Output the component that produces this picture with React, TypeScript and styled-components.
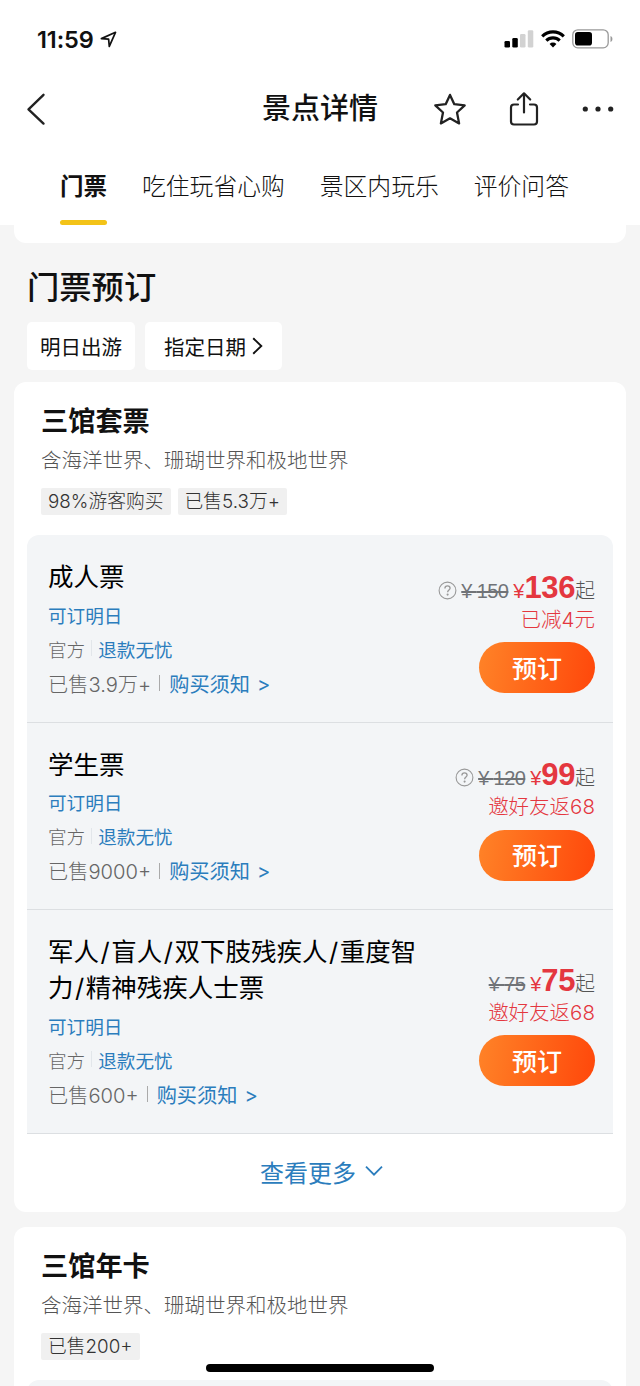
import React from "react";
import styled, { createGlobalStyle } from "styled-components";

const GlobalStyle = createGlobalStyle`
  * { box-sizing: border-box; }
  body {
    margin: 0;
    background: #f5f5f5;
    font-family: Inter, "Noto Sans CJK SC", sans-serif;
    color: #111;
  }
`;

const blue = "#2b7dbd";
const red = "#e4373f";

const Screen = styled.div`
  position: relative;
  width: 640px;
  height: 1386px;
  overflow: hidden;
  background: #f5f5f5;
`;

const Header = styled.header`
  height: 225px;
  background: #fff;
`;

const StatusBar = styled.div`
  display: flex;
  align-items: center;
  justify-content: space-between;
  height: 78px;
  padding: 0 27px 0 37px;
`;

const StatusGroup = styled.div<{ $gap: number }>`
  display: flex;
  align-items: center;
  gap: ${(p) => p.$gap}px;
`;

const Time = styled.span`
  font-size: 23.5px;
  font-weight: 600;
  letter-spacing: -0.1px;
`;

const NavBar = styled.div`
  display: flex;
  align-items: center;
  height: 62px;
  padding: 0 25px;
`;

const NavSide = styled.div<{ $end?: boolean }>`
  flex: 1;
  display: flex;
  align-items: center;
  justify-content: ${(p) => (p.$end ? "flex-end" : "flex-start")};
  gap: ${(p) => (p.$end ? 42 : 0)}px;
`;

const NavTitle = styled.h1`
  margin: 0;
  font-size: 29px;
  line-height: 40px;
  font-weight: 500;
`;

const Tabs = styled.nav`
  display: flex;
  gap: 35px;
  height: 85px;
  padding-left: 60px;
`;

const Tab = styled.div<{ $active?: boolean }>`
  display: flex;
  flex-direction: column;
  justify-content: space-between;
  padding-top: 29px;
  font-size: ${(p) => (p.$active ? 23.5 : 23.8)}px;
  line-height: 36px;
  font-weight: ${(p) => (p.$active ? 700 : 300)};
  white-space: nowrap;
  &::after {
    content: "";
    height: 5px;
    border-radius: 3px;
    background: ${(p) => (p.$active ? "#f3c318" : "transparent")};
  }
`;

const HeaderTail = styled.div`
  height: 18px;
  margin: 0 14px;
  background: #fff;
  border-radius: 0 0 12px 12px;
`;

const SectionTitle = styled.h2`
  margin: 22px 0 12px 27px;
  font-size: 32.3px;
  line-height: 45px;
  font-weight: 500;
`;

const Chips = styled.div`
  display: flex;
  gap: 10px;
  margin: 0 27px 12px;
`;

const Chip = styled.div<{ $width: number }>`
  display: flex;
  align-items: center;
  justify-content: center;
  gap: 6px;
  width: ${(p) => p.$width}px;
  height: 48px;
  border-radius: 5px;
  background: #fff;
  font-size: 20.5px;
  font-weight: 400;
`;

const Card = styled.section<{ $height: number }>`
  height: ${(p) => p.$height}px;
  margin: 0 14px 15px;
  padding: 22px 13px 0;
  border-radius: 12px;
  background: #fff;
`;

const CardTitle = styled.h3`
  margin: 0 0 4px 14px;
  font-size: 27.2px;
  line-height: 36px;
  font-weight: 700;
`;

const CardSub = styled.p`
  margin: 0 0 10px 14px;
  font-size: 20.5px;
  line-height: 34px;
  font-weight: 300;
  color: #555;
`;

const Tags = styled.div`
  display: flex;
  gap: 7px;
  margin: 0 0 20px 14px;
`;

const Tag = styled.span`
  height: 27px;
  padding: 0 7px;
  border-radius: 2px;
  background: #f0f0f0;
  font-size: 18.8px;
  line-height: 27px;
  font-weight: 300;
  color: #333;
  white-space: nowrap;
`;

const TicketList = styled.div`
  min-height: 30px;
  border-radius: 12px 12px 0 0;
  background: #f3f5f7;
`;

const Ticket = styled.div`
  display: flex;
  align-items: center;
  justify-content: space-between;
  padding: 24px 18px 20.5px 21px;
  border-bottom: 1px solid #dcdfe2;
`;

const TicketInfo = styled.div`
  width: 390px;
`;

const TicketName = styled.div`
  margin-bottom: 2px;
  font-size: 25.5px;
  line-height: 36px;
  font-weight: 400;
  color: #000;
`;

const Slash = styled.span`
  margin: 0 1.5px;
`;

const InfoLine = styled.div<{ $size: number; $height: number; $link?: boolean }>`
  display: flex;
  align-items: center;
  height: ${(p) => p.$height}px;
  font-size: ${(p) => p.$size}px;
  font-weight: ${(p) => (p.$link ? 400 : 300)};
  color: ${(p) => (p.$link ? blue : "#666")};
  white-space: nowrap;
`;

const Divider = styled.i<{ $color: string; $left: number; $right: number }>`
  width: 1px;
  height: 16px;
  margin: 0 ${(p) => p.$right}px 0 ${(p) => p.$left}px;
  background: ${(p) => p.$color};
`;

const BlueText = styled.span`
  font-weight: 400;
  color: ${blue};
`;

const Arrow = styled(BlueText)`
  margin-left: 7px;
`;

const Offer = styled.div`
  display: flex;
  flex-direction: column;
  align-items: flex-end;
`;

const PriceRow = styled.div`
  display: flex;
  align-items: baseline;
  height: 42px;
  line-height: 42px;
  font-family: "Liberation Sans", "Noto Sans CJK SC", sans-serif;
  white-space: nowrap;
`;

const HelpIcon = styled.svg`
  align-self: center;
  margin: 5px 4px 0 0;
`;

const OldPrice = styled.span`
  font-size: 20px;
  letter-spacing: -0.6px;
  color: #707377;
  text-decoration: line-through;
  text-decoration-thickness: 1.5px;
`;

const Yen = styled.span`
  margin-left: 5px;
  font-size: 20px;
  color: ${red};
`;

const Amount = styled.span`
  font-size: 31px;
  font-weight: 700;
  letter-spacing: -0.4px;
  color: ${red};
`;

const From = styled.span`
  font-size: 20px;
  font-weight: 300;
  color: #555;
`;

const Note = styled.div`
  margin-bottom: 11.5px;
  font-size: 20.5px;
  line-height: 22px;
  font-weight: 300;
  color: ${red};
`;

const BookButton = styled.button`
  width: 116px;
  height: 51px;
  padding: 0 0 2px;
  border: 0;
  border-radius: 26px;
  background: linear-gradient(100deg, #ff8026 5%, #ff4a0c 95%);
  color: #fff;
  font-family: inherit;
  font-size: 25px;
  font-weight: 500;
`;

const More = styled.div`
  display: flex;
  align-items: center;
  justify-content: center;
  gap: 9px;
  height: 75px;
  padding-left: 3px;
  font-size: 24px;
  font-weight: 400;
  color: ${blue};
`;

const HomeIndicator = styled.div`
  position: absolute;
  left: 206px;
  bottom: 14px;
  width: 228px;
  height: 8px;
  border-radius: 4px;
  background: #000;
`;

type TicketData = {
  name: string;
  sold: string;
  old: string;
  price: string;
  note: string;
  help?: boolean;
};

const tickets: TicketData[] = [
  { name: "成人票", sold: "已售3.9万+", old: "150", price: "136", note: "已减4元", help: true },
  { name: "学生票", sold: "已售9000+", old: "120", price: "99", note: "邀好友返68", help: true },
  {
    name: "军人/盲人/双下肢残疾人/重度智力/精神残疾人士票",
    sold: "已售600+",
    old: "75",
    price: "75",
    note: "邀好友返68",
  },
];

function TicketRow({ t }: { t: TicketData }) {
  return (
    <Ticket>
      <TicketInfo>
        <TicketName>
          {t.name.split("/").map((part, i) => (
            <React.Fragment key={i}>
              {i > 0 && <Slash>/</Slash>}
              {part}
            </React.Fragment>
          ))}
        </TicketName>
        <InfoLine $size={18.6} $height={34} $link>
          可订明日
        </InfoLine>
        <InfoLine $size={18.6} $height={34}>
          官方
          <Divider $color="#e2e6ea" $left={6} $right={6} />
          <BlueText>退款无忧</BlueText>
        </InfoLine>
        <InfoLine $size={20.2} $height={36}>
          {t.sold}
          <Divider $color="#aaa" $left={8} $right={9} />
          <BlueText>购买须知</BlueText>
          <Arrow>&gt;</Arrow>
        </InfoLine>
      </TicketInfo>
      <Offer>
        <PriceRow>
          {t.help && (
            <HelpIcon width="19" height="19" viewBox="0 0 19 19" fill="none" stroke="#999" strokeWidth="1.1">
              <circle cx="9.5" cy="9.5" r="8.4" />
              <path d="M6.9 7.4c0-1.5 1.1-2.5 2.6-2.5s2.6 1 2.6 2.3c0 1.7-2.5 1.9-2.5 4" strokeWidth="1.3" />
              <circle cx="9.6" cy="13.6" r="0.5" fill="#999" />
            </HelpIcon>
          )}
          <OldPrice>¥ {t.old}</OldPrice>
          <Yen>¥</Yen>
          <Amount>{t.price}</Amount>
          <From>起</From>
        </PriceRow>
        <Note>{t.note}</Note>
        <BookButton>预订</BookButton>
      </Offer>
    </Ticket>
  );
}

export default function App() {
  return (
    <Screen>
      <GlobalStyle />
      <Header>
        <StatusBar>
          <StatusGroup $gap={6}>
            <Time>11:59</Time>
            <svg width="17" height="17" viewBox="0 0 17 17" fill="none" stroke="#111" strokeWidth="1.7" strokeLinejoin="round">
              <path d="M15.5 1.3 9.3 15.4 8.6 8.2 1.4 7.6Z" />
            </svg>
          </StatusGroup>
          <StatusGroup $gap={7}>
            <svg width="30" height="18" viewBox="0 0 30 18">
              <rect x="0.5" y="11" width="5.5" height="6.5" rx="1.3" fill="#000" />
              <rect x="8.3" y="8" width="5.5" height="9.5" rx="1.3" fill="#000" />
              <rect x="16" y="4" width="5.5" height="13.5" rx="1.3" fill="#d2d2d2" />
              <rect x="23.8" y="0.3" width="5.5" height="17.2" rx="1.3" fill="#d2d2d2" />
            </svg>
            <svg width="24" height="18" viewBox="0 0 24 18" fill="none" stroke="#000" strokeWidth="3.1">
              <path d="M1.2 6.3a15.3 15.3 0 0 1 21.6 0" />
              <path d="M5.3 10.6a9.5 9.5 0 0 1 13.4 0" />
              <path d="M12 17.4 8.6 14a4.8 4.8 0 0 1 6.8 0Z" fill="#000" stroke="none" />
            </svg>
            <svg width="41" height="20" viewBox="0 0 41 20">
              <rect x="0.8" y="0.8" width="35.4" height="18" rx="5" fill="none" stroke="#999" strokeWidth="1.3" />
              <rect x="3" y="3" width="17" height="13.6" rx="2.8" fill="#000" />
              <path d="M38.5 7v6c1.4-.6 1.9-1.7 1.9-3s-.5-2.400-1.900-3Z" fill="#999" />
            </svg>
          </StatusGroup>
        </StatusBar>
        <NavBar>
          <NavSide>
            <svg width="22" height="34" viewBox="0 0 22 34" fill="none" stroke="#222" strokeWidth="2.4" strokeLinecap="round" strokeLinejoin="round">
              <path d="M18.500 2.800 3.500 17.300 18.500 31.600" />
            </svg>
          </NavSide>
          <NavTitle>景点详情</NavTitle>
          <NavSide $end>
            <svg width="34" height="34" viewBox="0 0 34 34" fill="none" stroke="#222" strokeWidth="2.3" strokeLinejoin="round">
              <path d="M17 2.900 21.300 12.200 31.700 13.400 24 20.500 26.100 31.400 17 26.300 7.900 31.400 10 20.500 2.300 13.400 12.700 12.200Z" />
            </svg>
            <svg width="30" height="36" viewBox="0 0 30 36" fill="none" stroke="#222" strokeWidth="2.2" strokeLinecap="round" strokeLinejoin="round">
              <path d="M9 13.500H5Q2 13.500 2 16.500V30.500Q2 33.500 5 33.500H25Q28 33.500 28 30.500V16.500Q28 13.500 25 13.500H21" />
              <path d="M15 21.500V2.500M8.800 8.500 15 2.300 21.200 8.500" />
            </svg>
            <svg width="34" height="8" viewBox="0 0 34 8" fill="#222">
              <circle cx="4.300" cy="4" r="2.600" />
              <circle cx="17" cy="4" r="2.600" />
              <circle cx="29.700" cy="4" r="2.600" />
            </svg>
          </NavSide>
        </NavBar>
        <Tabs>
          <Tab $active>门票</Tab>
          <Tab>吃住玩省心购</Tab>
          <Tab>景区内玩乐</Tab>
          <Tab>评价问答</Tab>
        </Tabs>
      </Header>
      <HeaderTail />
      <SectionTitle>门票预订</SectionTitle>
      <Chips>
        <Chip $width={108}>明日出游</Chip>
        <Chip $width={137}>
          指定日期
          <svg width="11" height="18" viewBox="0 0 11 18" fill="none" stroke="#111" strokeWidth="1.900">
            <path d="M1.200 1.200 9.300 9 1.200 16.800" />
          </svg>
        </Chip>
      </Chips>
      <Card $height={830}>
        <CardTitle>三馆套票</CardTitle>
        <CardSub>含海洋世界、珊瑚世界和极地世界</CardSub>
        <Tags>
          <Tag>98%游客购买</Tag>
          <Tag>已售5.3万+</Tag>
        </Tags>
        <TicketList>
          {tickets.map((t) => (
            <TicketRow key={t.name} t={t} />
          ))}
        </TicketList>
        <More>
          查看更多
          <svg width="18" height="12" viewBox="0 0 18 12" fill="none" stroke={blue} strokeWidth="1.800">
            <path d="M1 1.700 9 9.700 17 1.700" />
          </svg>
        </More>
      </Card>
      <Card $height={200}>
        <CardTitle>三馆年卡</CardTitle>
        <CardSub>含海洋世界、珊瑚世界和极地世界</CardSub>
        <Tags>
          <Tag>已售200+</Tag>
        </Tags>
        <TicketList />
      </Card>
      <HomeIndicator />
    </Screen>
  );
}
